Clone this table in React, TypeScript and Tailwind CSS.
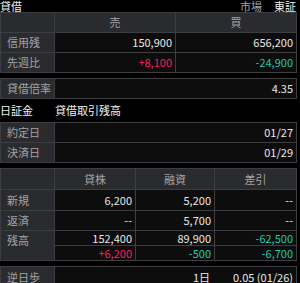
import React from "react";

const font = { fontFamily: '"Noto Sans CJK JP", "Noto Sans", sans-serif' };

const L = "bg-[#2a2b2e] text-[#a3a3a3] pl-[6px] flex items-center";
const V = "bg-[#0d0d0d] text-[#e8e8e8] pr-[3px] flex items-center justify-end";
const H = "bg-[#2a2b2e] text-[#a3a3a3] flex items-center justify-center";
const RED = "text-[#ff1f55]";
const TEAL = "text-[#1ec8b4]";

export default function App() {
  return (
    <div className="w-[300px] h-[283px] bg-black overflow-hidden text-[11px] leading-none" style={font}>
      <div className="h-[12px] flex items-start justify-between pr-[4px] text-[#f0f0f0] leading-[12px]">
        <span>貸借</span>
        <span className="flex gap-[12px]">
          <span className="text-[#a3a3a3]">市場</span>
          <span>東証</span>
        </span>
      </div>

      <div className="w-[297px] grid grid-cols-[53px_120px_120px] grid-rows-[19px_19px_19px] gap-px p-px bg-[#3d3e42]">
        <div className={H}></div>
        <div className={H}>売</div>
        <div className={H}>買</div>
        <div className={L}>信用残</div>
        <div className={V}>150,900</div>
        <div className={V}>656,200</div>
        <div className={L}>先週比</div>
        <div className={V}><span className={RED}>+8,100</span></div>
        <div className={V}><span className={TEAL}>-24,900</span></div>
      </div>

      <div className="mt-[5px] w-[297px] grid grid-cols-[53px_241px] grid-rows-[19px] gap-px p-px bg-[#3d3e42]">
        <div className={L}>貸借倍率</div>
        <div className={V}>4.35</div>
      </div>

      <div className="h-[23px] flex items-center text-[#f0f0f0]">
        <span className="w-[55px]">日証金</span>
        <span>貸借取引残高</span>
      </div>

      <div className="w-[297px] grid grid-cols-[53px_241px] grid-rows-[19px_19px] gap-px p-px bg-[#3d3e42]">
        <div className={L}>約定日</div>
        <div className={V}>01/27</div>
        <div className={L}>決済日</div>
        <div className={V}>01/29</div>
      </div>

      <div className="mt-[5px] w-[297px] grid grid-cols-[53px_80px_78px_81px] grid-rows-[20px_20px_19px_14px_14px] gap-px p-px bg-[#3d3e42]">
        <div className={H}></div>
        <div className={H}>貸株</div>
        <div className={H}>融資</div>
        <div className={H}>差引</div>
        <div className={L}>新規</div>
        <div className={V}>6,200</div>
        <div className={V}>5,200</div>
        <div className={V}>--</div>
        <div className={L}>返済</div>
        <div className={V}>--</div>
        <div className={V}>5,700</div>
        <div className={V}>--</div>
        <div className={"row-span-2 bg-[#2a2b2e] text-[#a3a3a3] pl-[6px] pt-[4px]"}>残高</div>
        <div className={V}>152,400</div>
        <div className={V}>89,900</div>
        <div className={V}><span className={TEAL}>-62,500</span></div>
        <div className={V}><span className={RED}>+6,200</span></div>
        <div className={V}><span className={TEAL}>-500</span></div>
        <div className={V}><span className={TEAL}>-6,700</span></div>
      </div>

      <div className="mt-[5px] w-[297px] grid grid-cols-[53px_241px] grid-rows-[20px] gap-px p-px bg-[#3d3e42]">
        <div className={L}>逆日歩</div>
        <div className="bg-[#0d0d0d] text-[#e8e8e8] flex items-center">
          <span className="w-[158px] text-right pr-[3px]">1日</span>
          <span className="flex-1 text-right pr-[3px]">0.05 (01/26)</span>
        </div>
      </div>
    </div>
  );
}
